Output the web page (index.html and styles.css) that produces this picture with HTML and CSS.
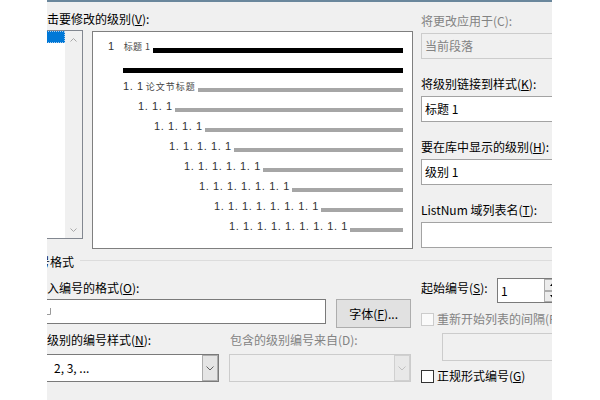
FILE: index.html
```html
<!DOCTYPE html>
<html lang="zh-CN">
<head>
<meta charset="utf-8">
<title>定义新多级列表</title>
<link rel="stylesheet" href="styles.css">
</head>
<body>
<div class="dialog">
  <div class="upper">
    <div class="levels">
      <div class="label">击要修改的级别(<u>V</u>):</div>
      <div class="level-row">
        <div class="listbox">
          <div class="items"><div class="item sel"></div></div>
          <div class="vscroll">
            <span class="sbtn"><svg width="7" height="4" viewBox="0 0 7 4"><path d="M0.5 3.5 L3.5 0.5 L6.5 3.5" fill="none" stroke="#a8a8a8"/></svg></span>
            <span class="sbtn"><svg width="7" height="4" viewBox="0 0 7 4"><path d="M0.5 0.5 L3.5 3.5 L6.5 0.5" fill="none" stroke="#a8a8a8"/></svg></span>
          </div>
        </div>
        <div class="preview">
          <div class="prow r1"><span class="num">1</span><span class="cap h1">标题 1</span><i class="bar black b1"></i></div>
          <div class="prow r1b"><i class="bar black"></i></div>
          <div class="prow r2"><span class="num">1. 1</span><span class="cap h2">论文节标题</span><i class="bar b2"></i></div>
          <div class="prow r3"><span class="num">1. 1. 1</span><i class="bar"></i></div>
          <div class="prow r4"><span class="num">1. 1. 1. 1</span><i class="bar"></i></div>
          <div class="prow r5"><span class="num">1. 1. 1. 1. 1</span><i class="bar"></i></div>
          <div class="prow r6"><span class="num">1. 1. 1. 1. 1. 1</span><i class="bar"></i></div>
          <div class="prow r7"><span class="num">1. 1. 1. 1. 1. 1. 1</span><i class="bar"></i></div>
          <div class="prow r8"><span class="num">1. 1. 1. 1. 1. 1. 1. 1</span><i class="bar"></i></div>
          <div class="prow r9"><span class="num">1. 1. 1. 1. 1. 1. 1. 1. 1</span><i class="bar"></i></div>
        </div>
      </div>
    </div>
    <div class="side">
      <div class="field">
        <div class="label dis">将更改应用于(C):</div>
        <div class="box dis">当前段落</div>
      </div>
      <div class="field">
        <div class="label">将级别链接到样式(<u>K</u>):</div>
        <div class="box">标题 1</div>
      </div>
      <div class="field">
        <div class="label">要在库中显示的级别(<u>H</u>):</div>
        <div class="box">级别 1</div>
      </div>
      <div class="field">
        <div class="label">ListNum 域列表名(<u>T</u>):</div>
        <div class="box"></div>
      </div>
    </div>
  </div>

  <div class="group-title"><span class="gt-text">编号格式</span><span class="gt-line"></span></div>

  <div class="lower">
    <div class="lower-left">
      <div class="label">入编号的格式(<u>O</u>):</div>
      <div class="fmt-row">
        <div class="input fmt"><svg class="pmark" width="6" height="9" viewBox="0 0 6 9"><path d="M5.5 0 V6.5 H0.5 M2 5 L0.5 6.5 L2 8" fill="none" stroke="#9a9a9a"/></svg></div>
        <button class="btn">字体(<u>F</u>)...</button>
      </div>
      <div class="combo-labels">
        <div class="label cl1">级别的编号样式(<u>N</u>):</div>
        <div class="label dis">包含的级别编号来自(D):</div>
      </div>
      <div class="combos">
        <div class="combo c1"><span class="val">2, 3, ...</span><span class="drop"><svg width="8" height="5" viewBox="0 0 8 5"><path d="M0.5 0.5 L4 4 L7.5 0.5" fill="none" stroke="#606060"/></svg></span></div>
        <div class="combo dis c2"><span class="val"></span><span class="drop"><svg width="8" height="5" viewBox="0 0 8 5"><path d="M0.5 0.5 L4 4 L7.5 0.5" fill="none" stroke="#c0c0c0"/></svg></span></div>
      </div>
    </div>
    <div class="lower-right">
      <div class="start-row">
        <span class="label start-label">起始编号(<u>S</u>):</span>
        <div class="spin">
          <span class="val">1</span>
          <div class="spin-btns">
            <span class="sb"><svg width="5" height="3" viewBox="0 0 5 3"><path d="M0 3 L2.5 0 L5 3 Z" fill="#000"/></svg></span>
            <span class="sb"><svg width="5" height="3" viewBox="0 0 5 3"><path d="M0 0 L2.5 3 L5 0 Z" fill="#000"/></svg></span>
          </div>
        </div>
      </div>
      <div class="check dis"><span class="cbox"></span>重新开始列表的间隔(R):</div>
      <div class="combo dis c3"></div>
      <div class="check last"><span class="cbox"></span>正规形式编号(<u>G</u>)</div>
    </div>
  </div>
</div>
</body>
</html>
```

FILE: styles.css
```css
html, body {
  margin: 0;
  padding: 0;
  background: #ffffff;
}

body {
  font-family: "Noto Sans CJK SC", "Liberation Sans", sans-serif;
  font-size: 12px;
  color: #000000;
}

.dialog {
  margin-left: 47px;
  width: 505px;
  height: 400px;
  box-sizing: border-box;
  background: #f0f0f0;
  border-top: 2px solid #6a879c;
  overflow: hidden;
}

.label {
  line-height: 16px;
  height: 16px;
  white-space: nowrap;
}

.dis {
  color: #838383;
}

u {
  text-decoration: underline;
  text-underline-offset: 1px;
}

/* ---------- upper part ---------- */
.upper {
  display: flex;
  padding-top: 9px;
}

.levels {
  display: flex;
  flex-direction: column;
  flex-shrink: 0;
}

.levels > .label {
  margin-bottom: 3px;
}

.level-row {
  display: flex;
  align-items: flex-start;
}

.listbox {
  margin-left: -10px;
  width: 46px;
  height: 209px;
  box-sizing: border-box;
  border: 1px solid #828790;
  background: #ffffff;
  display: flex;
}

.items {
  width: 27px;
}

.item.sel {
  height: 12px;
  box-sizing: border-box;
  background: #0078d7;
  border: 1px dotted #a9cdef;
}

.vscroll {
  width: 17px;
  background: #f0f0f0;
  display: flex;
  flex-direction: column;
  justify-content: space-between;
}

.sbtn {
  height: 17px;
  display: flex;
  align-items: center;
  justify-content: center;
}

.sbtn svg {
  display: block;
}

.preview {
  margin-left: 9px;
  margin-top: 1px;
  width: 321px;
  height: 218px;
  box-sizing: border-box;
  border: 1px solid #7f7f7f;
  background: #ffffff;
  padding: 4px 9px 0 0;
  font-family: "Liberation Sans", sans-serif;
  font-size: 11px;
  color: #333333;
}

.prow {
  display: flex;
  align-items: baseline;
  height: 20px;
  line-height: 20px;
  white-space: nowrap;
}

.num {
  letter-spacing: 0.6px;
}

.cap {
  font-family: "Noto Sans CJK SC", sans-serif;
  font-size: 9px;
  color: #444444;
}

.cap.h1 {
  margin-left: 9px;
  letter-spacing: 0.4px;
}

.cap.h2 {
  margin-left: 2px;
  letter-spacing: 1px;
}

.bar {
  flex: 1;
  align-self: flex-end;
  height: 4px;
  margin-bottom: 4px;
  margin-left: 2px;
  background: #a6a6a6;
}

.bar.black {
  height: 5px;
  margin-bottom: 3px;
  background: #000000;
}

.bar.b1 {
  margin-left: 3px;
}

.r1 { padding-left: 15px; }
.r1b { padding-left: 30px; }
.r1b .bar { margin-left: 0; }
.r2 { padding-left: 30px; }
.r3 { padding-left: 45px; }
.r4 { padding-left: 61px; }
.r5 { padding-left: 76px; }
.r6 { padding-left: 91px; }
.r7 { padding-left: 106px; }
.r8 { padding-left: 121px; }
.r9 { padding-left: 136px; }

.side {
  margin-left: 8px;
  padding-top: 2px;
  width: 170px;
  flex-shrink: 0;
  display: flex;
  flex-direction: column;
  gap: 17px;
}

.field .label {
  margin-bottom: 4px;
}

.box {
  height: 26px;
  box-sizing: border-box;
  border: 1px solid #a3a3a3;
  background: #ffffff;
  padding-left: 3px;
  line-height: 24px;
  white-space: nowrap;
}

.box.dis {
  background: #f0f0f0;
  border-color: #cccccc;
}

/* ---------- group title ---------- */
.group-title {
  display: flex;
  align-items: flex-start;
  margin-top: 5px;
  margin-left: -21px;
  height: 16px;
  line-height: 16px;
}

.gt-text {
  white-space: nowrap;
}

.gt-line {
  flex: 1;
  margin-left: 6px;
  margin-top: 6px;
  border-top: 1px solid #dcdcdc;
}

/* ---------- lower part ---------- */
.lower {
  display: flex;
}

.lower-left {
  width: 364px;
  flex-shrink: 0;
  padding-top: 10px;
}

.fmt-row {
  display: flex;
  align-items: flex-start;
  margin-top: 3px;
}

.input.fmt {
  margin-left: -10px;
  width: 290px;
  height: 25px;
  box-sizing: border-box;
  border: 1px solid #7a7a7a;
  background: #ffffff;
  display: flex;
  align-items: center;
}

.pmark {
  display: block;
  margin-left: 7px;
  margin-top: 1px;
}

.btn {
  margin-left: 10px;
  width: 75px;
  height: 29px;
  box-sizing: border-box;
  border: 1px solid #adadad;
  background: #e1e1e1;
  font-family: inherit;
  font-size: 12px;
  color: #000000;
  padding: 0;
}

.combo-labels {
  display: flex;
  margin-top: 4px;
}

.cl1 {
  width: 183px;
  flex-shrink: 0;
}

.combos {
  display: flex;
  gap: 10px;
  margin-top: 6px;
}

.combo {
  height: 28px;
  box-sizing: border-box;
  border: 1px solid #7a7a7a;
  background: #ffffff;
  display: flex;
}

.combo .val {
  flex: 1;
  line-height: 26px;
  white-space: nowrap;
}

.combo.c1 {
  margin-left: -10px;
  width: 182px;
}

.combo.c1 .val {
  padding-left: 16px;
}

.combo.c2 {
  width: 183px;
}

.combo.dis {
  background: #f0f0f0;
  border-color: #cccccc;
}

.drop {
  width: 16px;
  box-sizing: border-box;
  border: 1px solid #adadad;
  background: #e5e5e5;
  display: flex;
  align-items: center;
  justify-content: center;
}

.combo.dis .drop {
  border-color: #d0d0d0;
  background: #e8e8e8;
}

.drop svg {
  display: block;
}

.lower-right {
  margin-left: 10px;
  width: 170px;
  flex-shrink: 0;
}

.start-row {
  display: flex;
  align-items: flex-start;
  margin-top: 8px;
}

.start-label {
  width: 76px;
  flex-shrink: 0;
  margin-top: 2px;
}

.spin {
  width: 64px;
  height: 25px;
  box-sizing: border-box;
  border: 1px solid #7a7a7a;
  background: #ffffff;
  display: flex;
  flex-shrink: 0;
}

.spin .val {
  flex: 1;
  padding-left: 3px;
  line-height: 23px;
}

.spin-btns {
  width: 16px;
  display: flex;
  flex-direction: column;
}

.sb {
  flex: 1;
  box-sizing: border-box;
  border: 1px solid #adadad;
  background: #ececec;
  display: flex;
  align-items: center;
  justify-content: center;
}

.sb svg {
  display: block;
}

.check {
  display: flex;
  align-items: center;
  height: 16px;
  line-height: 16px;
  margin-top: 8px;
  white-space: nowrap;
}

.check.last {
  margin-top: 7px;
}

.cbox {
  width: 13px;
  height: 13px;
  box-sizing: border-box;
  border: 1px solid #333333;
  background: #ffffff;
  margin-right: 3px;
  flex-shrink: 0;
}

.check.dis .cbox {
  border-color: #cccccc;
  background: #fafafa;
}

.combo.c3 {
  margin-left: 21px;
  margin-top: 6px;
  width: 140px;
}
```
